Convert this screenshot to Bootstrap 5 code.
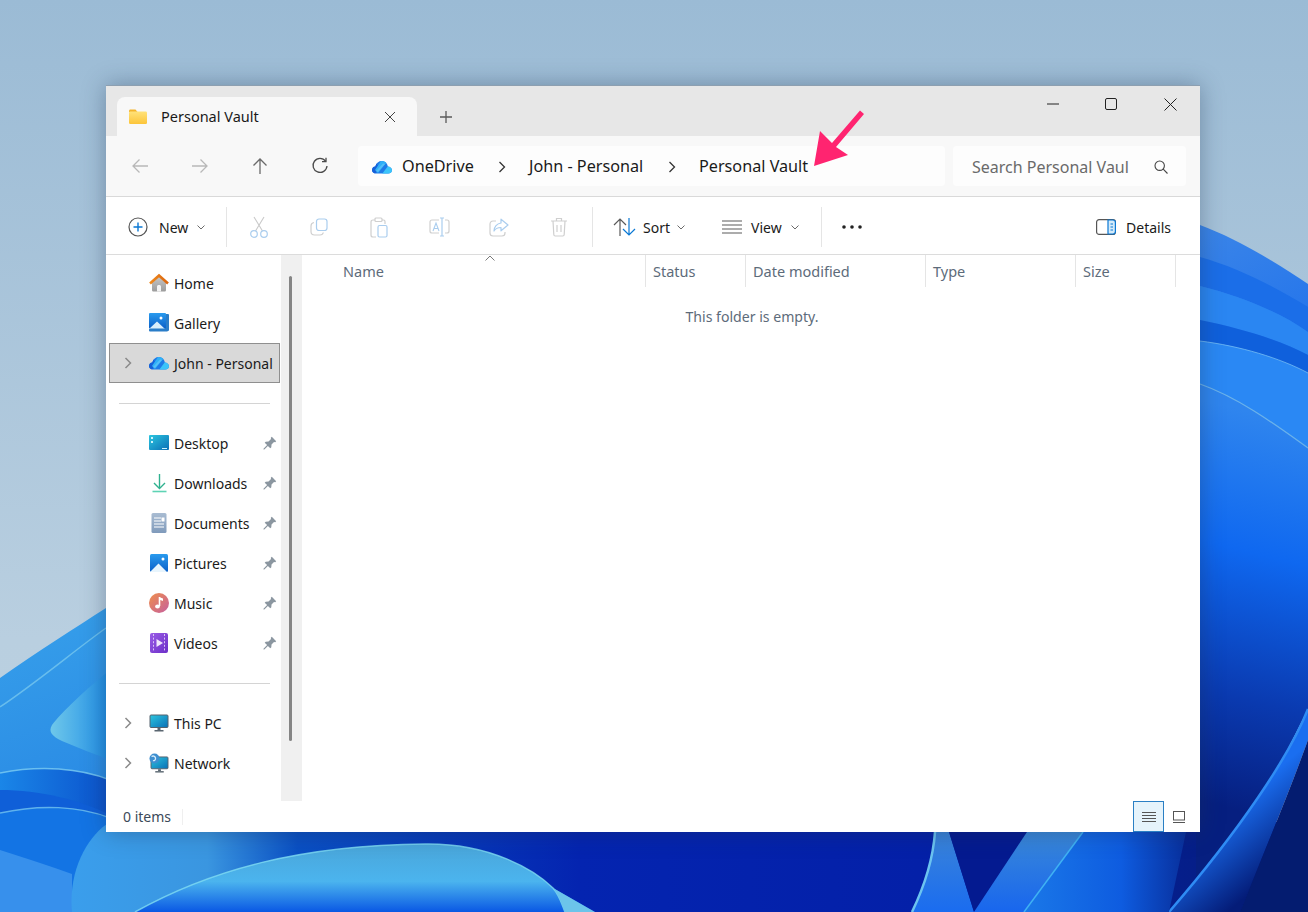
<!DOCTYPE html>
<html lang="en">
<head>
<meta charset="utf-8">
<title>Personal Vault</title>
<link href="https://cdn.jsdelivr.net/npm/bootstrap@5.3.0/dist/css/bootstrap.min.css" rel="stylesheet">
<style>
html,body{height:100%;margin:0;overflow:hidden}
body{background:#a3c0d7;font-family:"Noto Sans","Open Sans",sans-serif;font-size:14px;color:#1b1b1b}
.wall{position:absolute;left:0;top:0;width:1308px;height:912px}
.defs{position:absolute;width:0;height:0}
.win{position:absolute;left:106px;top:85px;width:1094px;height:747px;background:#fff;box-shadow:0 0 22px rgba(30,50,80,.38);border-top:1px solid #8d9fb0;overflow:hidden}
.tabbar{height:50px;background:#e7e7e7;padding-left:11px}
.tabx{width:300px;height:39px;margin-top:11px;background:#f8f8f8;border-radius:8px 8px 0 0;padding:0 0 0 12px;font-size:14.5px;color:#1a1a1a}
.tabx .ttl{margin-left:14px}
.tabclose{margin-left:auto;margin-right:21px;line-height:0}
.plus{margin:11px 0 0 22px;height:39px;line-height:0}
.ctrl{margin-left:auto;height:36px;padding-right:23px;gap:46px}
.ctrl .cl{margin-left:1px}
.addr{height:61px;background:#f8f8f8;border-bottom:1px solid #d9d9d9;padding:10px 14px 0 4px}
.navb{width:60px;height:40px}
.crumb{width:587px;height:40px;background:#fdfdfd;border-radius:4px;padding:1px 0 0 14px;font-size:16.2px;margin:0 8px;color:#1a1a1a}
.crumb .lbl1{margin-left:10px;width:96px}
.crumb .lbl2{width:139px}
.crumb .sep1{width:10px;margin-right:21px;line-height:0}
.srch{width:233px;height:40px;background:#fdfdfd;border-radius:4px;padding:1px 0 0 19px;font-size:16px;color:#6a6a6a}
.srch .stxt{width:157px;white-space:nowrap}
.srch .sico{margin-left:25px;line-height:0}
.tools{height:58px;border-bottom:1px solid #dcdcdc;padding:3px 0 0 22px;font-size:14px;color:#1a1a1a}
.tsep{width:1px;height:40px;background:#e5e5e5}
.tsep1{margin-left:21px}.tsep2{margin-left:3px}.tsep3{margin-left:22px}
.tgrp{margin-left:2px}
.tbtn{width:60px;height:40px}
.lab-new{margin-left:11px;width:38px}
.lab-sort{margin-left:6px;width:34px}
.lab-view{margin-left:9px;width:40px}
.i-sort{margin-left:20px}.i-view{margin-left:37px}.i-dots{margin-left:20px}
.lab-det{margin:0 29px 0 10px}
.main{height:546px}
.side{width:175px;padding-top:8px}
.nrow{height:40px;margin-left:3px;width:171px;border:1px solid transparent;padding-right:2px;white-space:nowrap}
.nrow.sel{background:#d9d9d9;border-color:#8f8f8f}
.chv{width:39px;padding-left:14px;line-height:0}
.nic{width:22px;line-height:0}
.nlab{margin-left:3px}
.pin{margin-left:auto;line-height:0}
.nsep{height:1px;background:#d4d4d4;margin:20px 0 19px 13px;width:151px}
.sbar{width:20px;background:#f0f0f0}
.thumb{width:3px;height:465px;background:#858585;border-radius:2px;margin:21px 0 0 8px}
.cont{flex:1;border-left:1px solid #f0f0f0;position:relative}
.hdr{height:32px;color:#5d6b7a;font-size:14.5px}
.hc{border-right:1px solid #e5e5e5;padding:1px 0 0 7px;height:32px}
.hc1{width:344px;padding-left:41px}
.hc2{width:100px}.hc3{width:180px}.hc4{width:150px}.hc5{width:100px}
.caret{position:absolute;left:182px;top:0;line-height:0}
.empty{color:#5d6b7a;font-size:14.1px;margin-top:19px;padding-left:2px}
.stat{height:31px;padding-left:17px;font-size:14px;color:#3c4a59}
.stsep{width:1px;height:16px;background:#efefef;margin-left:11px}
.vact{margin-left:auto;width:31px;height:31px;background:#e5f3fb;border:1px solid #2a7fc4}
.vsec{width:36px;height:31px;line-height:0;padding-left:9px}
</style>
</head>
<body>
<svg class="defs" aria-hidden="true">
<defs>
<linearGradient id="gFold" x1="0" y1="0" x2="0" y2="1"><stop offset="0" stop-color="#ffe27a"/><stop offset="1" stop-color="#fcc53a"/></linearGradient>
<linearGradient id="gHome" x1="0" y1="0" x2="0" y2="1"><stop offset="0" stop-color="#c8c8c8"/><stop offset="1" stop-color="#9c9c9c"/></linearGradient>
<linearGradient id="gRoof" x1="0" y1="0" x2="1" y2="0"><stop offset="0" stop-color="#f08a1d"/><stop offset="1" stop-color="#d9650f"/></linearGradient>
<linearGradient id="gDesk" x1="0" y1="0" x2="1" y2="1"><stop offset="0" stop-color="#2cc6df"/><stop offset="1" stop-color="#0a6fb6"/></linearGradient>
<linearGradient id="gPic" x1="0" y1="0" x2="0" y2="1"><stop offset="0" stop-color="#2a9bee"/><stop offset="1" stop-color="#0a5fc8"/></linearGradient>
<linearGradient id="gDoc" x1="0" y1="0" x2="0" y2="1"><stop offset="0" stop-color="#a9bcd2"/><stop offset="1" stop-color="#7f9abb"/></linearGradient>
<linearGradient id="gMus" x1="0" y1="0" x2="1" y2="1"><stop offset="0" stop-color="#ef8f4c"/><stop offset="1" stop-color="#c65f9e"/></linearGradient>
<linearGradient id="gVid" x1="0" y1="0" x2="1" y2="1"><stop offset="0" stop-color="#9a5ce6"/><stop offset="1" stop-color="#6c2fc8"/></linearGradient>
<clipPath id="odClip"><path d="M4 13.500C1.700 13.500 0 12 0 9.900 0 8 1.400 6.600 3.300 6.400 4.200 3 6.800 1 9.800 1c2.200 0 4 1 5 2.800.6 1 .9 1.700 1 2.700 2.300.2 4.200 1.600 4.200 3.700 0 2-1.700 3.300-3.800 3.300Z"/></clipPath>
<symbol id="od" viewBox="0 0 20 14"><g clip-path="url(#odClip)"><rect width="20" height="14" fill="#1f7be8"/><path d="M0 14V5L4 3 7 7 3 14Z" fill="#1660d8"/><path d="M3 10 9 1H16L10 8 6 13Z" fill="#2fb0f7"/><path d="M4 11 11 3.500 13 4 6 12Z" fill="#8fd8fb" opacity=".4"/><path d="M10 14 16 6 20 7V14Z" fill="#3cc4fa"/></g></symbol>
<symbol id="pinI" viewBox="0 0 14 14"><path d="M8.800.8 13.200 5.200 12.200 6.200 11 6 8.500 8.500 8.300 11.300 7.300 12.300 4.900 9.900 1.300 13.500.5 13.500.5 12.700 4.100 9.100 1.700 6.700 2.700 5.700 5.500 5.500 8 3 7.800 1.800Z" fill="#8b96a0"/></symbol>
<symbol id="chvI" viewBox="0 0 8 12"><path d="M1.500 1 6.500 6 1.500 11" fill="none" stroke="#8a8a8a" stroke-width="1.500"/></symbol>
<symbol id="dn" viewBox="0 0 8 5"><path d="M.5.5 4 4 7.500.5" fill="none" stroke="#6a6a6a" stroke-width="1"/></symbol>
<symbol id="mon" viewBox="0 0 20 18"><rect x="1" y="1" width="18" height="12.500" rx="1" fill="url(#gDesk)" stroke="#55626e" stroke-width="1"/><rect x="8.500" y="14" width="3" height="2" fill="#5a6670"/><rect x="5.500" y="16" width="9" height="1.500" fill="#5a6670"/></symbol>
</defs>
</svg>

<svg class="wall" viewBox="0 0 1308 912" preserveAspectRatio="none" aria-hidden="true">
<defs>
<linearGradient id="wSky" x1="0" y1="0" x2="0" y2="1"><stop offset="0" stop-color="#9bbbd5"/><stop offset=".7" stop-color="#b9cfe0"/><stop offset="1" stop-color="#bcd1e0"/></linearGradient>
<linearGradient id="wL1" x1="0" y1="0" x2="1" y2="1"><stop offset="0" stop-color="#3aa5ec"/><stop offset="1" stop-color="#0f5fd8"/></linearGradient>
<linearGradient id="wTip" x1="0" y1="0" x2="1" y2="0"><stop offset="0" stop-color="#6fc8ea"/><stop offset="1" stop-color="#1d8ce6"/></linearGradient>
<linearGradient id="wBand" x1="0" y1="0" x2="1" y2="0"><stop offset="0" stop-color="#1a86e8"/><stop offset="1" stop-color="#0b52cc"/></linearGradient>
<linearGradient id="wBase" gradientUnits="userSpaceOnUse" x1="72" y1="0" x2="1200" y2="0"><stop offset="0" stop-color="#3a9eec"/><stop offset=".12" stop-color="#3a96e0"/><stop offset=".2" stop-color="#0a50c4"/><stop offset=".45" stop-color="#0424b0"/><stop offset=".75" stop-color="#0420a8"/><stop offset="1" stop-color="#051e88"/></linearGradient>
<linearGradient id="wSw" x1="0" y1="1" x2="0" y2="0"><stop offset="0" stop-color="#0a58e4"/><stop offset=".45" stop-color="#4bb4ee"/><stop offset="1" stop-color="#4aa6da"/></linearGradient>
<linearGradient id="wR" gradientUnits="userSpaceOnUse" x1="1200" y1="225" x2="1308" y2="448"><stop offset="0" stop-color="#3b85e8"/><stop offset="1" stop-color="#1268ee"/></linearGradient>
<linearGradient id="wRb" gradientUnits="userSpaceOnUse" x1="1285" y1="420" x2="1195" y2="800"><stop offset="0" stop-color="#2f85ee"/><stop offset=".35" stop-color="#0f68f0"/><stop offset=".72" stop-color="#0a3ab0"/><stop offset="1" stop-color="#061f80"/></linearGradient>
<linearGradient id="wSp1" x1="0" y1="0" x2="0" y2="1"><stop offset="0" stop-color="#3b84d8"/><stop offset="1" stop-color="#1a6cf0"/></linearGradient>
<linearGradient id="wSp2" x1="0" y1="0" x2="0" y2="1"><stop offset="0" stop-color="#3a88d8"/><stop offset="1" stop-color="#1866ee"/></linearGradient>
<linearGradient id="wSp3" x1="0" y1="0" x2="1" y2="0"><stop offset="0" stop-color="#1a78e8"/><stop offset=".6" stop-color="#0e5ce0"/><stop offset="1" stop-color="#082f9c"/></linearGradient>
<linearGradient id="wWed" gradientUnits="userSpaceOnUse" x1="1240" y1="800" x2="1290" y2="860"><stop offset="0" stop-color="#1a6ef0"/><stop offset="1" stop-color="#041c78"/></linearGradient>
</defs>
<rect width="1308" height="912" fill="url(#wSky)"/>
<path d="M0 678C40 650 75 628 106 608L1000 560V912H0Z" fill="url(#wL1)"/>
<path d="M0 707C40 680 75 650 106 628" fill="none" stroke="#7fcdf0" stroke-width="1.500" opacity=".7"/>
<path d="M110 670C85 690 62 712 52 725 48 732 52 736 62 741 78 748 95 754 110 760Z" fill="url(#wTip)"/>
<path d="M0 773C40 765 80 768 110 780V912H0Z" fill="url(#wBand)"/>
<path d="M0 773C40 765 80 768 110 780" fill="none" stroke="#7ccdf2" stroke-width="1.500" opacity=".8"/>
<path d="M0 790C40 790 80 800 110 815V830H0Z" fill="#0f5fd8"/>
<path d="M0 813C40 804 80 806 110 818V912H0Z" fill="#1374e4"/>
<path d="M0 813C40 804 80 806 110 818" fill="none" stroke="#73c4f0" stroke-width="1.500" opacity=".8"/>
<path d="M0 850C25 858 50 866 72 874V912H0Z" fill="#3790ec"/>
<path d="M72 912C68 870 88 835 110 822H1308V912Z" fill="url(#wBase)"/>
<path d="M135 912C210 870 300 845 425 844 490 843 535 870 553 888L595 912Z" fill="url(#wSw)"/>
<path d="M135 912C210 870 300 845 425 844 490 843 535 870 553 888 560 896 562 905 565 912" fill="none" stroke="#7fdcf2" stroke-width="1.500" opacity=".8"/>
<path d="M553 888 595 912H565C562 905 560 896 553 888Z" fill="#6cc4ea"/>
<path d="M1200 225C1240 240 1280 265 1308 284V460H1200Z" fill="url(#wR)"/>
<path d="M1200 257C1240 268 1280 290 1308 307V332C1280 312 1240 296 1200 286Z" fill="#1b6ee8"/>
<path d="M1200 286C1240 296 1280 312 1308 332V355C1280 340 1240 328 1200 320Z" fill="#2a86f2"/>
<path d="M1200 320C1240 328 1280 340 1308 355V373C1280 358 1240 346 1200 341Z" fill="#0f60dc"/>
<path d="M1200 341C1240 346 1280 358 1308 373V448C1280 428 1240 398 1200 384Z" fill="#2a88f4"/>
<path d="M1200 341C1240 346 1280 358 1308 373" fill="none" stroke="#7fc4f4" stroke-width="1" opacity=".7"/>
<path d="M1200 384C1240 398 1280 428 1308 448V709C1290 745 1270 785 1253 809L1196 882V384Z" fill="url(#wRb)"/>
<path d="M1200 384C1240 398 1280 428 1308 448" fill="none" stroke="#88c8e8" stroke-width="1.200" opacity=".7"/>
<path d="M1308 709C1290 755 1240 830 1169 912H1240C1265 850 1290 790 1308 740Z" fill="url(#wWed)"/>
<path d="M1308 740C1290 790 1265 850 1240 912H1308Z" fill="#041c70"/>
<path d="M1308 709C1290 755 1240 830 1169 912" fill="none" stroke="#2f8cf4" stroke-width="2.500"/>
<path d="M935 832H949L974 912H912C925 885 933 860 935 832Z" fill="url(#wSp1)"/>
<path d="M935 832C933 860 925 885 912 912" fill="none" stroke="#6cc4f0" stroke-width="2.500"/>
<path d="M949 832H1027L974 912Z" fill="#041a90"/>
<path d="M1027 832H1083L1024 912H974Z" fill="url(#wSp2)"/>
<path d="M1083 832H1186L1169 912H1024Z" fill="url(#wSp3)"/>
<path d="M1083 832 1024 912" fill="none" stroke="#3fb2f4" stroke-width="1.500"/>
</svg>

<div class="win">
  <div class="tabbar d-flex align-items-start">
    <div class="tabx d-flex align-items-center">
      <svg width="18" height="15" viewBox="0 0 18 15"><path d="M0 2C0 1.200.6.500 1.500.500H6.500l2 2.500H0Z" fill="#f4b42c"/><rect y="2.500" width="18" height="12.500" rx="1.200" fill="url(#gFold)"/></svg>
      <span class="ttl">Personal Vault</span>
      <span class="tabclose"><svg width="12" height="12" viewBox="0 0 12 12"><path d="M1 1 11 11M11 1 1 11" stroke="#444" stroke-width="1"/></svg></span>
    </div>
    <div class="plus d-flex align-items-center"><svg width="14" height="14" viewBox="0 0 14 14"><path d="M7 1V13M1 7H13" stroke="#5a5a5a" stroke-width="1.300"/></svg></div>
    <div class="ctrl d-flex align-items-center">
      <svg width="12" height="12" viewBox="0 0 12 12"><path d="M0 6H12" stroke="#222" stroke-width="1"/></svg>
      <svg width="12" height="12" viewBox="0 0 12 12"><rect x=".5" y=".5" width="11" height="11" rx="1.500" fill="none" stroke="#222" stroke-width="1"/></svg>
      <svg class="cl" width="13" height="13" viewBox="0 0 13 13"><path d="M.5.5 12.500 12.500M12.500.5.5 12.500" stroke="#222" stroke-width="1"/></svg>
    </div>
  </div>

  <div class="addr d-flex">
    <div class="navb d-flex align-items-center justify-content-center"><svg width="18" height="16" viewBox="0 0 18 16"><path d="M17 8H2M8.500 1.500 2 8l6.500 6.500" fill="none" stroke="#b8b8b8" stroke-width="1.300"/></svg></div>
    <div class="navb d-flex align-items-center justify-content-center"><svg width="18" height="16" viewBox="0 0 18 16"><path d="M1 8H16M9.500 1.500 16 8l-6.500 6.500" fill="none" stroke="#b8b8b8" stroke-width="1.300"/></svg></div>
    <div class="navb d-flex align-items-center justify-content-center"><svg width="16" height="18" viewBox="0 0 16 18"><path d="M8 17V2M1.500 8.500 8 2l6.500 6.500" fill="none" stroke="#6a6a6a" stroke-width="1.300"/></svg></div>
    <div class="navb d-flex align-items-center justify-content-center"><svg width="18" height="18" viewBox="0 0 18 18"><path d="M14.600 4.200A7 7 0 1 0 16 9" fill="none" stroke="#4a4a4a" stroke-width="1.300"/><path d="M15 .8V4.700H11" fill="none" stroke="#4a4a4a" stroke-width="1.300"/></svg></div>
    <div class="crumb d-flex align-items-center">
      <svg width="20" height="14"><use href="#od"/></svg>
      <span class="lbl1">OneDrive</span>
      <span class="sep1"><svg width="8" height="12"><path d="M1.500 1 6.500 6 1.500 11" fill="none" stroke="#333" stroke-width="1.300"/></svg></span>
      <span class="lbl2">John - Personal</span>
      <span class="sep1"><svg width="8" height="12"><path d="M1.500 1 6.500 6 1.500 11" fill="none" stroke="#333" stroke-width="1.300"/></svg></span>
      <span>Personal Vault</span>
    </div>
    <div class="srch d-flex align-items-center">
      <span class="stxt">Search Personal Vaul</span>
      <span class="sico"><svg width="14" height="14" viewBox="0 0 14 14"><circle cx="5.700" cy="5.700" r="4.700" fill="none" stroke="#444" stroke-width="1.100"/><path d="M9.200 9.200 13.500 13.500" stroke="#444" stroke-width="1.100"/></svg></span>
    </div>
  </div>

  <div class="tools d-flex align-items-center">
    <svg width="20" height="20" viewBox="0 0 20 20"><circle cx="10" cy="10" r="9" fill="none" stroke="#555" stroke-width="1.200"/><path d="M10 5.500V14.500M5.500 10H14.500" stroke="#0a78d4" stroke-width="1.400"/></svg>
    <span class="lab-new">New</span>
    <svg width="8" height="5"><use href="#dn"/></svg>
    <span class="tsep tsep1"></span>
    <div class="d-flex tgrp">
      <div class="tbtn d-flex align-items-center justify-content-center"><svg width="20" height="22" viewBox="0 0 20 22"><path d="M5 1 13.500 15M15 1 6.500 15" stroke="#c9c9c9" stroke-width="1.100"/><circle cx="5" cy="18" r="3.300" fill="none" stroke="#aacdee" stroke-width="1.200"/><circle cx="15" cy="18" r="3.300" fill="none" stroke="#aacdee" stroke-width="1.200"/></svg></div>
      <div class="tbtn d-flex align-items-center justify-content-center"><svg width="18" height="18" viewBox="0 0 18 18"><rect x="6.500" y="1" width="10.500" height="11.500" rx="2.500" fill="none" stroke="#aacdee" stroke-width="1.200"/><path d="M4 4.500C2 4.800 1 6 1 8v5.500C1 15.500 2.500 17 4.500 17H10c1.800 0 3-1 3.300-2.500" fill="none" stroke="#cfcfcf" stroke-width="1.200"/></svg></div>
      <div class="tbtn d-flex align-items-center justify-content-center"><svg width="18" height="21" viewBox="0 0 18 21"><path d="M12 3h1.500C14.500 3 15 3.700 15 4.500V7M5 3H3C2 3 1 3.700 1 5v13c0 1.200 1 2 2 2h3" fill="none" stroke="#cfcfcf" stroke-width="1.200"/><rect x="5" y="1" width="7" height="3.500" rx="1" fill="none" stroke="#cfcfcf" stroke-width="1.200"/><rect x="8" y="8.500" width="9" height="11.500" rx="1.500" fill="none" stroke="#aacdee" stroke-width="1.200"/></svg></div>
      <div class="tbtn d-flex align-items-center justify-content-center"><svg width="21" height="20" viewBox="0 0 21 20"><path d="M10 3H3C1.800 3 1 3.800 1 5v9c0 1.200.8 2 2 2h7M16 3h2c1.200 0 2 .8 2 2v9c0 1.200-.8 2-2 2h-2" fill="none" stroke="#cfcfcf" stroke-width="1.200"/><path d="M13 1V19M11 1H15M11 19H15" stroke="#aacdee" stroke-width="1.200"/><path d="M4 14 7 6l3 8M5 11.500H9" fill="none" stroke="#aacdee" stroke-width="1.100"/></svg></div>
      <div class="tbtn d-flex align-items-center justify-content-center"><svg width="20" height="19" viewBox="0 0 20 19"><path d="M7 3H4C2.200 3 1 4.200 1 6v9c0 1.800 1.200 3 3 3h9c1.800 0 3-1.200 3-3v-1" fill="none" stroke="#cfcfcf" stroke-width="1.200"/><path d="M12 1.200 19 7l-7 5.800V9.500C9 9.500 6.500 10.500 5 13c0-4 3-7.500 7-8Z" fill="none" stroke="#aacdee" stroke-width="1.200" stroke-linejoin="round"/></svg></div>
      <div class="tbtn d-flex align-items-center justify-content-center"><svg width="18" height="20" viewBox="0 0 18 20"><path d="M1 4H17M6.500 4V1.500h5V4M3 4l.8 13.500c0 .9.700 1.500 1.500 1.500h7.400c.8 0 1.500-.6 1.500-1.500L15 4M7 8V15M11 8V15" fill="none" stroke="#cfcfcf" stroke-width="1.200"/></svg></div>
    </div>
    <span class="tsep tsep2"></span>
    <svg class="i-sort" width="24" height="20" viewBox="0 0 24 20"><path d="M7 19V2M1 8 7 2l6 6" fill="none" stroke="#5a5a5a" stroke-width="1.200"/><path d="M16 1V18M10 12l6 6 6-6" fill="none" stroke="#0a78d4" stroke-width="1.200"/></svg>
    <span class="lab-sort">Sort</span>
    <svg width="8" height="5"><use href="#dn"/></svg>
    <svg class="i-view" width="20" height="14" viewBox="0 0 20 14"><path d="M0 1H20M0 5H20M0 9H20M0 13H20" stroke="#5a5a5a" stroke-width="1.100"/></svg>
    <span class="lab-view">View</span>
    <svg width="8" height="5"><use href="#dn"/></svg>
    <span class="tsep tsep3"></span>
    <svg class="i-dots" width="20" height="4" viewBox="0 0 20 4"><circle cx="2" cy="2" r="1.800" fill="#222"/><circle cx="10" cy="2" r="1.800" fill="#222"/><circle cx="18" cy="2" r="1.800" fill="#222"/></svg>
    <svg class="ms-auto" width="20" height="16" viewBox="0 0 20 16"><rect x=".6" y=".6" width="18.800" height="14.800" rx="2.500" fill="none" stroke="#555" stroke-width="1.200"/><path d="M12 1H17a2.400 2.400 0 0 1 2.400 2.400V12.600A2.400 2.400 0 0 1 17 15H12Z" fill="#d4ebfa" stroke="#0a78d4" stroke-width="1.200"/><path d="M14.500 5H17M14.500 8H17M14.500 11H17" stroke="#0a78d4" stroke-width="1"/></svg>
    <span class="lab-det">Details</span>
  </div>

  <div class="main d-flex">
    <div class="side flex-shrink-0">
      <div class="nrow d-flex align-items-center"><span class="chv"></span><span class="nic"><svg width="20" height="20" viewBox="0 0 20 20"><path d="M10 3 17 9.500V17c0 .8-.5 1.500-1.300 1.500H4.300C3.500 18.500 3 17.800 3 17V9.500Z" fill="url(#gHome)"/><path d="M8 18.500V13.500C8 12.500 8.800 12 10 12s2 .5 2 1.500v5Z" fill="#f4f4f4"/><path d="M1 10.500 10 2.500l9 8" fill="none" stroke="url(#gRoof)" stroke-width="2.600"/></svg></span><span class="nlab">Home</span></div>
      <div class="nrow d-flex align-items-center"><span class="chv"></span><span class="nic"><svg width="20" height="20" viewBox="0 0 20 20"><rect x="3" y="1" width="17" height="17" rx="1" fill="#2a7dc8"/><rect x="0" y="0" width="17" height="15.500" rx="1" fill="url(#gPic)"/><path d="M0 16 8 8.500 16 16Z" fill="#d8eefb"/><circle cx="12" cy="5" r="1.500" fill="#fff"/><rect y="15.500" width="19" height="3" rx="1" fill="#2a7dc8"/></svg></span><span class="nlab">Gallery</span></div>
      <div class="nrow sel d-flex align-items-center"><span class="chv"><svg width="8" height="12"><use href="#chvI"/></svg></span><span class="nic"><svg width="20" height="14"><use href="#od"/></svg></span><span class="nlab">John - Personal</span></div>
      <div class="nsep"></div>
      <div class="nrow d-flex align-items-center"><span class="chv"></span><span class="nic"><svg width="20" height="16" viewBox="0 0 20 16"><rect width="20" height="15" rx="1" fill="url(#gDesk)"/><rect x="2" y="2" width="2" height="2" fill="#cdf3fb"/><rect x="2" y="6" width="2" height="2" fill="#cdf3fb"/><rect x="13" y="13" width="5" height="1" fill="#cdf3fb"/></svg></span><span class="nlab">Desktop</span><span class="pin"><svg width="14" height="14"><use href="#pinI"/></svg></span></div>
      <div class="nrow d-flex align-items-center"><span class="chv"></span><span class="nic"><svg width="20" height="20" viewBox="0 0 20 20"><path d="M10.500 1V15" stroke="#2fb18f" stroke-width="1.400"/><path d="M5 10l5.500 5.500L16 10" fill="none" stroke="#2fb18f" stroke-width="1.400"/><path d="M3.500 18.500H17.500" stroke="#5ed3b4" stroke-width="1.600"/></svg></span><span class="nlab">Downloads</span><span class="pin"><svg width="14" height="14"><use href="#pinI"/></svg></span></div>
      <div class="nrow d-flex align-items-center"><span class="chv"></span><span class="nic"><svg width="20" height="20" viewBox="0 0 20 20"><rect x="2.500" y="0" width="15" height="20" rx="1.500" fill="url(#gDoc)"/><path d="M5 5H12M5 8H12M5 11H15M5 14H15" stroke="#fff" stroke-width="1.200"/><rect x="12.500" y="4.500" width="3" height="4" fill="#fff"/></svg></span><span class="nlab">Documents</span><span class="pin"><svg width="14" height="14"><use href="#pinI"/></svg></span></div>
      <div class="nrow d-flex align-items-center"><span class="chv"></span><span class="nic"><svg width="20" height="20" viewBox="0 0 20 20"><rect x="1" y="1" width="18" height="18" rx="1.500" fill="url(#gPic)"/><path d="M1 19 9.500 10.500 18 19Z" fill="#e8f5fd"/><circle cx="14" cy="6" r="1.500" fill="#fff"/></svg></span><span class="nlab">Pictures</span><span class="pin"><svg width="14" height="14"><use href="#pinI"/></svg></span></div>
      <div class="nrow d-flex align-items-center"><span class="chv"></span><span class="nic"><svg width="20" height="20" viewBox="0 0 20 20"><circle cx="10" cy="10" r="10" fill="url(#gMus)"/><path d="M10.500 4V13" stroke="#fff" stroke-width="1.600"/><ellipse cx="8.500" cy="13.500" rx="2.400" ry="2" fill="#fff"/><path d="M10.500 4.200 14 5.500V8L10.500 6.700Z" fill="#fff"/></svg></span><span class="nlab">Music</span><span class="pin"><svg width="14" height="14"><use href="#pinI"/></svg></span></div>
      <div class="nrow d-flex align-items-center"><span class="chv"></span><span class="nic"><svg width="20" height="20" viewBox="0 0 20 20"><rect x="1" y="0" width="18" height="20" rx="2" fill="url(#gVid)"/><path d="M4.500 1V19M15.500 1V19" stroke="#d9c2f5" stroke-width="1" stroke-dasharray="2 1.600"/><path d="M7.500 6 14 10 7.500 14Z" fill="#f0e6fb"/></svg></span><span class="nlab">Videos</span><span class="pin"><svg width="14" height="14"><use href="#pinI"/></svg></span></div>
      <div class="nsep"></div>
      <div class="nrow d-flex align-items-center"><span class="chv"><svg width="8" height="12"><use href="#chvI"/></svg></span><span class="nic"><svg width="20" height="18"><use href="#mon"/></svg></span><span class="nlab">This PC</span></div>
      <div class="nrow d-flex align-items-center"><span class="chv"><svg width="8" height="12"><use href="#chvI"/></svg></span><span class="nic"><svg width="20" height="20" viewBox="0 0 20 20"><use href="#mon" x="1" y="3" width="19" height="17"/><circle cx="5.500" cy="5.500" r="5" fill="#3f8fd0"/><path d="M2.500 3.500C4 2.500 6 3 6.500 5S5 8 4 7.500" fill="none" stroke="#d8eefb" stroke-width="1.300"/></svg></span><span class="nlab">Network</span></div>
    </div>
    <div class="sbar flex-shrink-0"><div class="thumb"></div></div>
    <div class="cont">
      <span class="caret"><svg width="12" height="6" viewBox="0 0 12 6"><path d="M1.500 5.500 6 1l4.500 4.500" fill="none" stroke="#7a7a7a" stroke-width="1"/></svg></span>
      <div class="hdr d-flex">
        <div class="hc hc1 d-flex align-items-center">Name</div>
        <div class="hc hc2 d-flex align-items-center">Status</div>
        <div class="hc hc3 d-flex align-items-center">Date modified</div>
        <div class="hc hc4 d-flex align-items-center">Type</div>
        <div class="hc hc5 d-flex align-items-center">Size</div>
      </div>
      <div class="empty text-center">This folder is empty.</div>
    </div>
  </div>

  <div class="stat d-flex align-items-center">
    <span>0 items</span><span class="stsep"></span>
    <div class="vact d-flex align-items-center justify-content-center"><svg width="14" height="12" viewBox="0 0 14 12"><path d="M0 1.500H14M0 4.500H14M0 7.500H14M0 10.500H14" stroke="#555" stroke-width="1"/></svg></div>
    <div class="vsec d-flex align-items-center"><svg width="12" height="12" viewBox="0 0 12 12"><rect x=".5" y=".5" width="11" height="8.500" fill="none" stroke="#555" stroke-width="1"/><path d="M0 11.500H12" stroke="#555" stroke-width="1"/></svg></div>
  </div>
</div>

<svg class="wall" viewBox="0 0 1308 912" aria-hidden="true"><path d="M814 166 820 131 832 143 860 110.500 864 114 836 147 848 155Z" fill="#ff2470"/></svg>

<script src="https://cdn.jsdelivr.net/npm/bootstrap@5.3.0/dist/js/bootstrap.bundle.min.js"></script>
</body>
</html>
